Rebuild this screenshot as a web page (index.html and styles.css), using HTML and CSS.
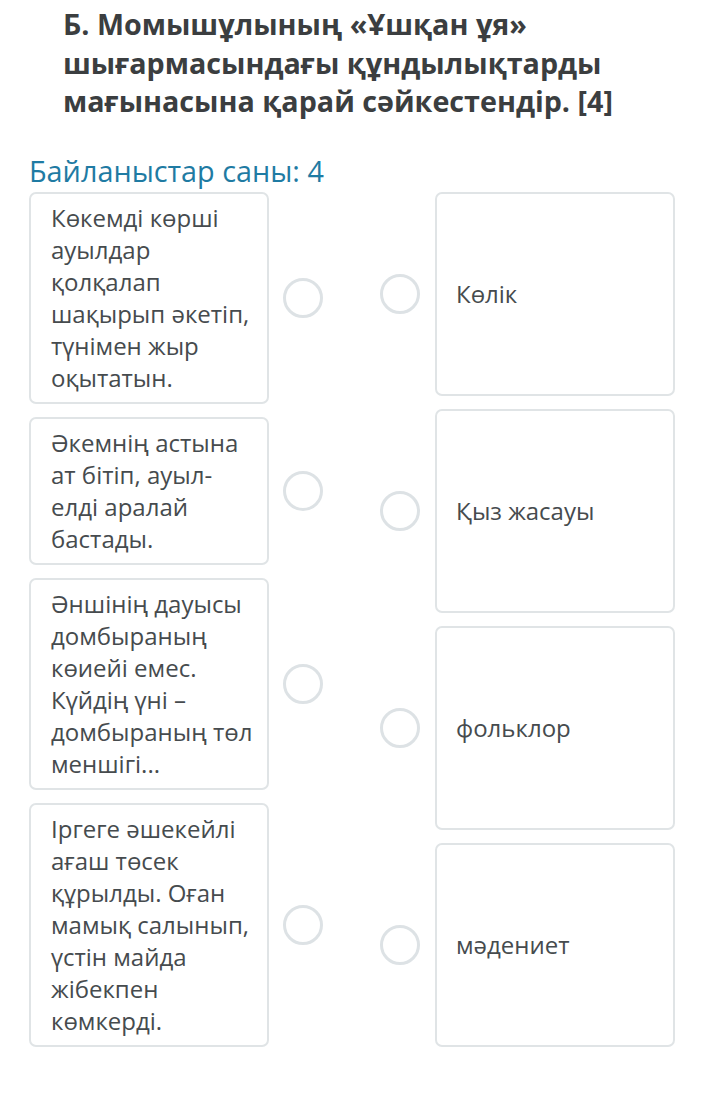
FILE: index.html
```html
<!DOCTYPE html>
<html lang="kk">
<head>
<meta charset="utf-8">
<title>Сәйкестендір</title>
<link rel="stylesheet" href="styles.css">
</head>
<body>
<main class="page">
  <h1 class="title">Б. Момышұлының «Ұшқан ұя»<br>шығармасындағы құндылықтарды<br>мағынасына қарай сәйкестендір. [4]</h1>
  <p class="count">Байланыстар саны: 4</p>
  <div class="match">
    <div class="col col-left">
      <div class="row-left">
        <div class="card">Көкемді көрші<br>ауылдар<br>қолқалап<br>шақырып әкетіп,<br>түнімен жыр<br>оқытатын.</div>
        <span class="dot"></span>
      </div>
      <div class="row-left">
        <div class="card">Әкемнің астына<br>ат бітіп, ауыл-<br>елді аралай<br>бастады.</div>
        <span class="dot"></span>
      </div>
      <div class="row-left">
        <div class="card">Әншінің дауысы<br>домбыраның<br>көиейі емес.<br>Күйдің үні –<br>домбыраның төл<br>меншігі...</div>
        <span class="dot"></span>
      </div>
      <div class="row-left">
        <div class="card">Іргеге әшекейлі<br>ағаш төсек<br>құрылды. Оған<br>мамық салынып,<br>үстін майда<br>жібекпен<br>көмкерді.</div>
        <span class="dot"></span>
      </div>
    </div>
    <div class="col col-right">
      <div class="row-right">
        <span class="dot"></span>
        <div class="card card-right">Көлік</div>
      </div>
      <div class="row-right">
        <span class="dot"></span>
        <div class="card card-right">Қыз жасауы</div>
      </div>
      <div class="row-right">
        <span class="dot"></span>
        <div class="card card-right">фольклор</div>
      </div>
      <div class="row-right">
        <span class="dot"></span>
        <div class="card card-right">мәдениет</div>
      </div>
    </div>
  </div>
</main>
</body>
</html>
```

FILE: styles.css
```css
* { box-sizing: border-box; }

html, body {
  margin: 0;
  padding: 0;
  background: #ffffff;
}

body {
  font-family: "Open Sans", "Noto Sans", "DejaVu Sans", sans-serif;
  color: #444a4d;
}

.page {
  padding: 5px 37px 0 29px;
}

.title {
  margin: 0;
  padding-left: 34px;
  font-size: 28.7px;
  line-height: 38.5px;
  font-weight: 700;
  white-space: nowrap;
  color: #3b3e40;
}

.count {
  margin: 32.5px 0 3px 0;
  font-size: 28.8px;
  line-height: 36px;
  font-weight: 400;
  color: #1f7ba3;
}

.match {
  display: flex;
  gap: 57px;
  align-items: stretch;
}

.col {
  display: flex;
  flex-direction: column;
  gap: 13px;
}

.row-left {
  display: flex;
  align-items: center;
  gap: 14px;
}

.row-right {
  flex: 1;
  display: flex;
  align-items: center;
  gap: 15px;
}

.dot {
  flex: none;
  width: 40px;
  height: 40px;
  border: 3px solid #dde2e5;
  border-radius: 50%;
}

.card {
  width: 240px;
  border: 2px solid #e0e4e6;
  border-radius: 7px;
  padding: 8px 10px 8px 20px;
  font-size: 24px;
  line-height: 32px;
  color: #464b4e;
  background: #ffffff;
  white-space: nowrap;
}

.card-right {
  align-self: stretch;
  display: flex;
  align-items: center;
  padding-left: 19px;
}
```
